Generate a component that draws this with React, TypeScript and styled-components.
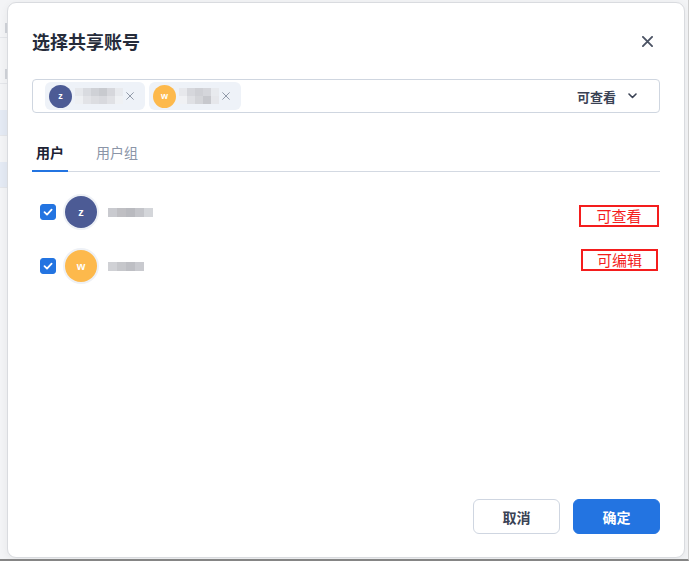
import React, { useState } from 'react';
import styled, { createGlobalStyle } from 'styled-components';

const GlobalStyle = createGlobalStyle`
  html, body {
    margin: 0;
    padding: 0;
    background: #f2f3f5;
  }
  body {
    font-family: "Noto Sans CJK SC", "Noto Sans", "Liberation Sans", sans-serif;
    color: #252b3a;
  }
  * {
    box-sizing: border-box;
  }
`;

const Page = styled.div`
  position: relative;
  width: 689px;
  height: 561px;
  overflow: hidden;
  background: #f3f4f6;
  border-right: 1px solid #cfcfcf;
  border-bottom: 2px solid #858585;
`;

// page that sits behind the dialog, only a sliver of it shows on the left
const Backdrop = styled.div`
  display: flex;
  flex-direction: column;
  gap: 26px;
  padding-top: 18px;
  width: 40px;
`;

const BackdropItem = styled.div<{ $active?: boolean }>`
  height: ${(p) => (p.$active ? '26px' : '20px')};
  background: ${(p) => (p.$active ? '#e4eaf4' : 'transparent')};
  border-bottom: 1px solid #e4e6ea;
  &::before {
    content: '';
    display: ${(p) => (p.$active ? 'none' : 'block')};
    width: 5px;
    height: 10px;
    margin-top: 5px;
    border-right: 2px solid #d0d3d9;
  }
`;

const Dialog = styled.div`
  position: absolute;
  left: 7px;
  top: 2px;
  width: 678px;
  height: 556px;
  display: flex;
  flex-direction: column;
  padding: 22px 24px 23px 24px;
  background: #ffffff;
  border: 1px solid #d9dbdf;
  border-radius: 9px;
  box-shadow: 0 2px 8px rgba(0, 0, 0, 0.06);
`;

const Header = styled.div`
  display: flex;
  align-items: center;
  justify-content: space-between;
  height: 32px;
`;

const Title = styled.h2`
  margin: 0;
  font-size: 18px;
  font-weight: 700;
  color: #252b3a;
`;

const CloseButton = styled.button`
  display: flex;
  align-items: center;
  justify-content: center;
  width: 20px;
  height: 20px;
  margin-right: 3px;
  padding: 0;
  border: none;
  background: transparent;
  color: #4a5263;
  cursor: pointer;
`;

const SelectBox = styled.div`
  display: flex;
  align-items: center;
  gap: 4px;
  height: 34px;
  margin-top: 22px;
  padding: 0 22px 0 12px;
  border: 1px solid #cfd6e0;
  border-radius: 4px;
`;

const Chip = styled.div`
  display: flex;
  align-items: center;
  height: 28px;
  padding: 0 11px 0 4px;
  gap: 3px;
  background: #eef2f8;
  border-radius: 6px;
`;

const ChipRemove = styled.span`
  display: flex;
  align-items: center;
  color: #8a93a3;
`;

const PermissionSelect = styled.div`
  display: flex;
  align-items: center;
  gap: 12px;
  margin-left: auto;
  font-size: 13px;
  font-weight: 700;
  color: #3a4254;
`;

const Avatar = styled.div<{ $color: string; $size: number }>`
  display: flex;
  align-items: center;
  justify-content: center;
  flex-shrink: 0;
  width: ${(p) => p.$size}px;
  height: ${(p) => p.$size}px;
  border-radius: 50%;
  background: ${(p) => p.$color};
  color: #ffffff;
  font-family: "Liberation Sans", "Noto Sans", sans-serif;
  font-size: ${(p) => (p.$size > 26 ? 11 : 9)}px;
  font-weight: 700;
  box-shadow: 0 0 0 ${(p) => (p.$size > 26 ? 2 : 0)}px #eef1f6;
`;

const MosaicGrid = styled.div<{ $cell: number }>`
  display: flex;
  flex-direction: column;
  & > div {
    display: flex;
  }
  & span {
    display: block;
    width: ${(p) => p.$cell}px;
    height: ${(p) => p.$cell}px;
  }
`;

const Tabs = styled.div`
  display: flex;
  gap: 24px;
  margin-top: 18px;
  border-bottom: 1px solid #d3d9e2;
`;

const Tab = styled.button<{ $active?: boolean }>`
  padding: 11px 4px 8px;
  margin-bottom: -1px;
  border: none;
  border-bottom: 2px solid ${(p) => (p.$active ? '#2374e1' : 'transparent')};
  background: transparent;
  font-family: inherit;
  font-size: 14px;
  line-height: 20px;
  font-weight: ${(p) => (p.$active ? 700 : 400)};
  color: ${(p) => (p.$active ? '#1c2233' : '#8b95a7')};
  cursor: pointer;
`;

const UserList = styled.div`
  display: flex;
  flex-direction: column;
  padding-top: 13px;
`;

const UserRow = styled.label`
  display: flex;
  align-items: center;
  height: 54px;
  padding-left: 8px;
  cursor: pointer;
`;

const CheckBox = styled.span<{ $checked: boolean }>`
  display: flex;
  align-items: center;
  justify-content: center;
  width: 16px;
  height: 16px;
  margin-right: 9px;
  border-radius: 3px;
  background: ${(p) => (p.$checked ? '#2374e1' : '#ffffff')};
  border: 1px solid ${(p) => (p.$checked ? '#2374e1' : '#c3cad5')};
`;

const NameSlot = styled.div`
  margin-left: 11px;
`;

// red annotation boxes drawn on the screenshot
const Annotation = styled.div<{ $width: number; $mt: number; $mb: number; $mr: number }>`
  display: flex;
  align-items: center;
  justify-content: center;
  width: ${(p) => p.$width}px;
  height: 22px;
  margin: ${(p) => `${p.$mt}px ${p.$mr}px ${p.$mb}px auto`};
  border: 2px solid #f41d1d;
  color: #f41d1d;
  font-size: 15px;
  line-height: 18px;
`;

const Footer = styled.div`
  display: flex;
  justify-content: flex-end;
  gap: 13px;
  margin-top: auto;
`;

const FooterButton = styled.button<{ $primary?: boolean }>`
  width: 87px;
  height: 35px;
  border-radius: 6px;
  border: 1px solid ${(p) => (p.$primary ? '#2374e1' : '#cfd6e1')};
  background: ${(p) => (p.$primary ? '#2374e1' : '#ffffff')};
  color: ${(p) => (p.$primary ? '#ffffff' : '#3a4254')};
  font-family: inherit;
  font-size: 14px;
  font-weight: 700;
  cursor: pointer;
`;

type Mosaic = string[][];

const MosaicName: React.FC<{ cells: Mosaic; cell: number }> = ({ cells, cell }) => (
  <MosaicGrid $cell={cell}>
    {cells.map((row, i) => (
      <div key={i}>
        {row.map((c, j) => (
          <span key={j} style={{ background: c }} />
        ))}
      </div>
    ))}
  </MosaicGrid>
);

interface Account {
  id: string;
  letter: string;
  color: string;
  chipName: Mosaic;
  listName: Mosaic;
  permission: string;
  note: { width: number; mt: number; mb: number; mr: number };
}

const accounts: Account[] = [
  {
    id: 'z',
    letter: 'z',
    color: '#4c5b95',
    chipName: [
      ['#e6e8ec', '#d9dbe0', '#cfd1d6', '#c8cacf', '#d6d7dc', '#e8eaee'],
      ['#eef0f3', '#e2e3e7', '#dcdde1', '#d8d9de', '#e0e1e5', '#eff1f4'],
    ],
    listName: [['#c9cacf', '#bfbfc3', '#b9babf', '#c4c5ca', '#d4d6da']],
    permission: '可查看',
    note: { width: 80, mt: 8, mb: 0, mr: 1 },
  },
  {
    id: 'w',
    letter: 'w',
    color: '#fdb94c',
    chipName: [
      ['#e7e8ec', '#d6d7dc', '#cfd0d5', '#d5d6db', '#e8eaee'],
      ['#f0f1f4', '#dfe0e4', '#d4d5d9', '#c7c8cd', '#e6e7eb'],
    ],
    listName: [['#d0d1d5', '#c6c7cb', '#bebfc4', '#c9cacf']],
    permission: '可编辑',
    note: { width: 77, mt: 0, mb: 12, mr: 2 },
  },
];

const CheckIcon = () => (
  <svg width="10" height="10" viewBox="0 0 10 10" fill="none">
    <path d="M1.5 5.2 L4 7.6 L8.6 2.6" stroke="#ffffff" strokeWidth="1.8" strokeLinecap="round" strokeLinejoin="round" />
  </svg>
);

const SmallX: React.FC<{ size: number; width: number }> = ({ size, width }) => (
  <svg width={size} height={size} viewBox="0 0 12 12" fill="none">
    <path d="M1 1 L11 11 M11 1 L1 11" stroke="currentColor" strokeWidth={width} strokeLinecap="round" />
  </svg>
);

const App: React.FC = () => {
  const [tab, setTab] = useState<'user' | 'group'>('user');
  const [checked, setChecked] = useState<Record<string, boolean>>({ z: true, w: true });

  return (
    <>
      <GlobalStyle />
      <Page>
        <Backdrop>
          <BackdropItem />
          <BackdropItem />
          <BackdropItem $active />
          <BackdropItem $active />
        </Backdrop>
        <Dialog>
          <Header>
            <Title>选择共享账号</Title>
            <CloseButton aria-label="关闭">
              <SmallX size={11} width={2} />
            </CloseButton>
          </Header>

          <SelectBox>
            {accounts.map((a) => (
              <Chip key={a.id}>
                <Avatar $color={a.color} $size={23}>
                  {a.letter}
                </Avatar>
                <MosaicName cells={a.chipName} cell={8} />
                <ChipRemove>
                  <SmallX size={8} width={1.4} />
                </ChipRemove>
              </Chip>
            ))}
            <PermissionSelect>
              可查看
              <svg width="9" height="6" viewBox="0 0 9 6" fill="none">
                <path d="M1 1 L4.5 4.5 L8 1" stroke="#3a4254" strokeWidth="1.6" strokeLinecap="round" strokeLinejoin="round" />
              </svg>
            </PermissionSelect>
          </SelectBox>

          <Tabs>
            <Tab $active={tab === 'user'} onClick={() => setTab('user')}>
              用户
            </Tab>
            <Tab $active={tab === 'group'} onClick={() => setTab('group')}>
              用户组
            </Tab>
          </Tabs>

          <UserList>
            {accounts.map((a) => (
              <UserRow
                key={a.id}
                onClick={() => setChecked((c) => ({ ...c, [a.id]: !c[a.id] }))}
              >
                <CheckBox $checked={!!checked[a.id]}>{checked[a.id] && <CheckIcon />}</CheckBox>
                <Avatar $color={a.color} $size={32}>
                  {a.letter}
                </Avatar>
                <NameSlot>
                  <MosaicName cells={a.listName} cell={9} />
                </NameSlot>
                <Annotation $width={a.note.width} $mt={a.note.mt} $mb={a.note.mb} $mr={a.note.mr}>
                  {a.permission}
                </Annotation>
              </UserRow>
            ))}
          </UserList>

          <Footer>
            <FooterButton>取消</FooterButton>
            <FooterButton $primary>确定</FooterButton>
          </Footer>
        </Dialog>
      </Page>
    </>
  );
};

export default App;
